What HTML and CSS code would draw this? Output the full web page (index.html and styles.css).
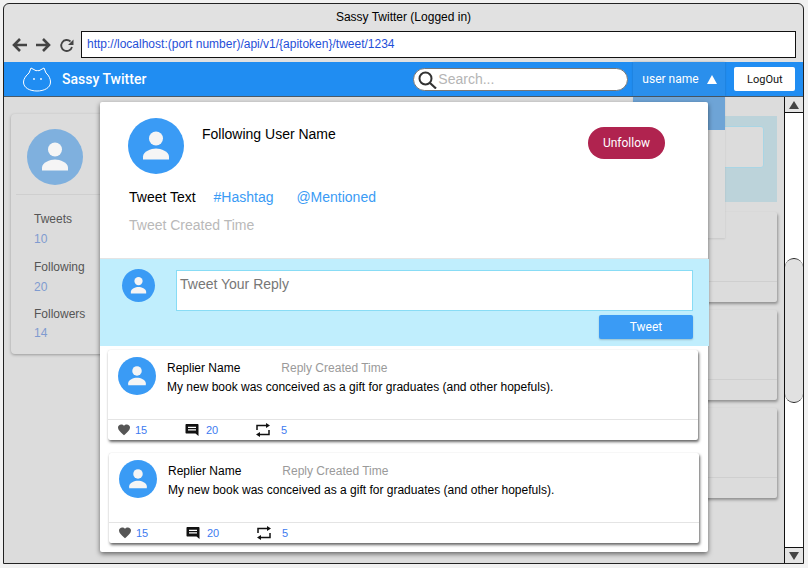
FILE: index.html
```html
<!DOCTYPE html>
<html lang="en">
<head>
  <meta charset="UTF-8">
  <title>Sassy Twitter (Logged in)</title>
  <link rel="stylesheet" href="styles.css">
</head>
<body>

<svg width="0" height="0" class="defs">
  <symbol id="person" viewBox="0 0 56 56">
    <circle cx="28" cy="28" r="28" fill="currentColor"/>
    <circle cx="28" cy="20.5" r="7" fill="#f5f5f5"/>
    <path d="M15 41.5v-3c0-5 8-8 13-8s13 3 13 8v3z" fill="#f5f5f5"/>
  </symbol>
  <symbol id="heart" viewBox="0 0 12 12">
    <path d="M6 11.2 5.1 10.400C2 7.600 0 5.800 0 3.500 0 1.700 1.400.4 3.200.4c1.100 0 2.100.5 2.800 1.300C6.700.9 7.700.4 8.800.4 10.600.4 12 1.700 12 3.500c0 2.300-2 4.100-5.100 6.900z" fill="#555"/>
  </symbol>
  <symbol id="comment" viewBox="0 0 14 14">
    <path d="M1.500 1h11c.6 0 1 .4 1 1v11l-3-2.500h-9c-.6 0-1-.4-1-1V2c0-.6.4-1 1-1z" fill="#111"/>
    <path d="M3 3.800h8v1.200H3zm0 2.500h8v1.200H3z" fill="#fff"/>
  </symbol>
  <symbol id="retweet" viewBox="0 0 16 16">
    <path d="M2 8V3.500h9.500M14 8v4.500H4.500" fill="none" stroke="#111" stroke-width="1.500"/>
    <path d="M11 1l4 2.500-4 2.500zM5 10l-4 2.500L5 15z" fill="#111"/>
  </symbol>
</svg>

<div class="window">
  <div class="title">Sassy Twitter (Logged in)</div>
  <div class="addressbar">
    <svg class="navicons" width="66" height="18" viewBox="0 0 66 18">
      <path d="M16 9H3M9 3 3 9l6 6" fill="none" stroke="#444" stroke-width="2.600"/>
      <path d="M25 9h13M32 3l6 6-6 6" fill="none" stroke="#444" stroke-width="2.600"/>
      <path d="M61 11a5.500 5.500 0 1 1-1.500-5.500" fill="none" stroke="#444" stroke-width="1.800"/>
      <path d="M62.500 3.500V9H57z" fill="#444"/>
    </svg>
    <div class="url">http://localhost:(port number)/api/v1/{apitoken}/tweet/1234</div>
  </div>

  <header class="navbar">
    <svg class="logo" width="28" height="26" viewBox="0 0 28 26">
      <path d="M6 7 8 2l5 2.700c1-.2 2-.2 3 0L21 2l2 5c3 2.500 4.500 6 4.500 9 0 6-6.500 9-13.500 9S.5 22 .5 16c0-3 2.500-6.500 5.500-9z" fill="none" stroke="#fff" stroke-width="1" stroke-linejoin="round"/>
      <circle cx="11" cy="13" r=".9" fill="#fff"/>
      <circle cx="18" cy="13" r=".9" fill="#fff"/>
    </svg>
    <span class="brand">Sassy Twitter</span>
    <div class="search">
      <svg width="20" height="20" viewBox="0 0 20 20">
        <circle cx="7.500" cy="9.500" r="6" fill="none" stroke="#333" stroke-width="2"/>
        <path d="m12 14 6 5.500" stroke="#333" stroke-width="2.200"/>
      </svg>
      <span>Search...</span>
    </div>
    <div class="usermenu">user name <span class="caret"></span></div>
    <button class="logout">LogOut</button>
  </header>

  <div class="content">
    <div class="page">
      <aside class="profile">
        <div class="profile-head">
          <svg class="avatar-lg avatar-dim"><use href="#person"/></svg>
        </div>
        <dl class="stats">
          <dt>Tweets</dt><dd>10</dd>
          <dt>Following</dt><dd>20</dd>
          <dt>Followers</dt><dd>14</dd>
        </dl>
      </aside>
      <div class="feed">
        <div class="composer"><div class="composer-box"></div></div>
        <div class="feed-card"><div class="feed-foot"></div></div>
        <div class="feed-card"><div class="feed-foot"></div></div>
        <div class="feed-card"><div class="feed-foot"></div></div>
      </div>
    </div>

    <div class="dropdown"></div>

    <div class="scrollbar">
      <div class="arrow"><span class="tri-up"></span></div>
      <div class="track"><div class="thumb"></div></div>
      <div class="arrow"><span class="tri-down"></span></div>
    </div>

    <div class="modal">
      <section class="tweet">
        <div class="tweet-head">
          <svg class="avatar-lg"><use href="#person"/></svg>
          <div class="following-name">Following User Name</div>
          <button class="unfollow">Unfollow</button>
        </div>
        <p class="tweet-text">Tweet Text <a>#Hashtag</a> <a>@Mentioned</a></p>
        <p class="tweet-time">Tweet Created Time</p>
      </section>

      <section class="reply-form">
        <svg class="avatar-sm"><use href="#person"/></svg>
        <div class="reply-col">
          <div class="reply-input">Tweet Your Reply</div>
          <button class="tweet-btn">Tweet</button>
        </div>
      </section>

      <article class="reply">
        <div class="reply-body">
          <svg class="avatar-md"><use href="#person"/></svg>
          <div>
            <div class="reply-meta"><span class="replier">Replier Name</span><span class="reply-time">Reply Created Time</span></div>
            <div class="reply-text">My new book was conceived as a gift for graduates (and other hopefuls).</div>
          </div>
        </div>
        <div class="reply-foot">
          <span class="act act-like"><svg width="12" height="12"><use href="#heart"/></svg>15</span>
          <span class="act act-comment"><svg width="14" height="14"><use href="#comment"/></svg>20</span>
          <span class="act act-retweet"><svg width="16" height="16"><use href="#retweet"/></svg>5</span>
        </div>
      </article>

      <article class="reply">
        <div class="reply-body">
          <svg class="avatar-md"><use href="#person"/></svg>
          <div>
            <div class="reply-meta"><span class="replier">Replier Name</span><span class="reply-time">Reply Created Time</span></div>
            <div class="reply-text">My new book was conceived as a gift for graduates (and other hopefuls).</div>
          </div>
        </div>
        <div class="reply-foot">
          <span class="act act-like"><svg width="12" height="12"><use href="#heart"/></svg>15</span>
          <span class="act act-comment"><svg width="14" height="14"><use href="#comment"/></svg>20</span>
          <span class="act act-retweet"><svg width="16" height="16"><use href="#retweet"/></svg>5</span>
        </div>
      </article>
    </div>
  </div>
</div>

</body>
</html>
```

FILE: styles.css
```css
html, body {
  margin: 0;
  padding: 0;
  height: 100%;
  overflow: hidden;
  background-color: #f1f1f1;
  font-family: "Liberation Sans", sans-serif;
  color: #000;
}

.defs {
  position: absolute;
}

button {
  font-family: "Roboto", sans-serif;
  border: none;
  padding: 0;
}

p {
  margin: 0;
}

.window {
  box-sizing: border-box;
  width: 801px;
  height: 561px;
  margin: 3px 0 0 3px;
  border: 1px solid #222;
  border-radius: 6px 6px 0 0;
  background-color: #e1e1e1;
  display: flex;
  flex-direction: column;
  overflow: hidden;
}

.title {
  height: 27px;
  line-height: 27px;
  text-align: center;
  font-size: 12px;
}

.addressbar {
  display: flex;
  align-items: center;
  height: 27px;
  padding: 0 7px;
}

.navicons {
  width: 66px;
  margin-right: 4px;
}

.url {
  box-sizing: border-box;
  flex: 1;
  height: 27px;
  line-height: 25px;
  padding-left: 5px;
  border: 1px solid #111;
  background-color: #fff;
  color: #1f4fd8;
  font-size: 12px;
}

.navbar {
  box-sizing: border-box;
  margin-top: 4px;
  height: 35px;
  display: flex;
  align-items: center;
  padding-left: 19px;
  background-color: #208df2;
  border-bottom: 1px solid #4a5a68;
  position: relative;
}

.logo {
  flex-shrink: 0;
}

.brand {
  margin-left: 11px;
  font-family: "Roboto", sans-serif;
  font-weight: 500;
  font-size: 14px;
  color: #fff;
}

.search {
  box-sizing: border-box;
  width: 215px;
  height: 23px;
  margin-left: 267px;
  padding-left: 4px;
  display: flex;
  align-items: center;
  background-color: #fff;
  border: 1px solid #777;
  border-radius: 12px;
  color: #b5b5b5;
  font-size: 14px;
}

.usermenu {
  box-sizing: border-box;
  width: 92px;
  height: 34px;
  margin-left: 5px;
  padding-left: 9px;
  display: flex;
  align-items: center;
  gap: 8px;
  font-family: "Roboto", sans-serif;
  font-size: 12px;
  color: #fff;
  background-color: #2a8fec;
  box-shadow: 0 0 2px rgba(0, 0, 0, 0.2);
}

.caret {
  width: 0;
  height: 0;
  border-left: 5px solid transparent;
  border-right: 5px solid transparent;
  border-bottom: 9px solid #fff;
}

.logout {
  width: 61px;
  height: 24px;
  margin-left: 9px;
  background-color: #fff;
  border-radius: 2px;
  font-size: 11px;
  color: #111;
}

.content {
  flex: 1;
  position: relative;
  background-color: #dcdcdc;
  overflow: hidden;
}

.page {
  display: flex;
  gap: 11px;
  padding: 17px 0 0 7px;
}

.profile {
  box-sizing: border-box;
  width: 200px;
  height: 240px;
  background-color: #dcdcdc;
  border-radius: 4px;
  box-shadow: 0 1px 3px rgba(0, 0, 0, 0.3);
}

.profile-head {
  box-sizing: border-box;
  height: 81px;
  margin: 0 5px;
  padding: 15px 0 0 11px;
  border-bottom: 1px solid #cfcfcf;
}

.stats {
  margin: 0;
  padding: 17px 0 0 23px;
  font-size: 12px;
}

.stats dt {
  color: #555;
  line-height: 14px;
}

.stats dd {
  margin: 6px 0 14px;
  color: #7f9bd0;
  line-height: 14px;
}

.stats dd:nth-of-type(2) {
  margin-bottom: 13px;
}

.stats dd:nth-of-type(3) {
  margin-top: 5px;
}

.feed {
  width: 555px;
  display: flex;
  flex-direction: column;
  gap: 8px;
}

.composer {
  height: 86px;
  margin: 2px 0;
  padding: 10px 13px 0 0;
  background-color: #bcd3da;
  box-sizing: border-box;
  display: flex;
  justify-content: flex-end;
}

.composer-box {
  width: 300px;
  height: 40px;
  border: 1px solid #a9d5e4;
  border-radius: 3px;
  background-color: #dcdcdc;
}

.feed-card {
  position: relative;
  height: 90px;
  background-color: #dcdcdc;
  border-radius: 2px;
  box-shadow: 1px 2px 3px rgba(0, 0, 0, 0.35);
}

.feed-foot {
  position: absolute;
  left: 0;
  right: 0;
  bottom: 20px;
  border-top: 1px solid #cfcfcf;
}

.dropdown {
  position: absolute;
  top: 0;
  left: 629px;
  width: 92px;
  height: 141px;
  background: linear-gradient(#6ea4d6 0, #6ea4d6 33px, #dcdcdc 33px);
  box-shadow: 0 1px 2px rgba(0, 0, 0, 0.1);
}

.scrollbar {
  position: absolute;
  top: 0;
  right: 0;
  bottom: 0;
  width: 18px;
  border-left: 1px solid #111;
  background-color: #fff;
  display: flex;
  flex-direction: column;
}

.arrow {
  height: 15px;
  background-color: #e4e4e4;
  display: flex;
  align-items: center;
  justify-content: center;
  flex-shrink: 0;
}

.tri-up, .tri-down {
  width: 0;
  height: 0;
  border-left: 5px solid transparent;
  border-right: 5px solid transparent;
}

.tri-up {
  border-bottom: 8px solid #444;
}

.tri-down {
  border-top: 8px solid #444;
}

.track {
  flex: 1;
  border-top: 1px solid #111;
  border-bottom: 1px solid #111;
  padding-top: 145px;
}

.thumb {
  height: 143px;
  background-color: #e1e1e1;
  border: 1px solid #222;
  border-left: none;
  border-right: none;
  border-radius: 9px;
}

.modal {
  position: absolute;
  top: 5px;
  left: 96px;
  width: 608px;
  height: 450px;
  background-color: #fff;
  border-radius: 2px;
  box-shadow: 0 2px 5px rgba(0, 0, 0, 0.55);
}

.tweet {
  height: 157px;
  box-sizing: border-box;
  padding: 16px 0 0 28px;
  border-bottom: 1px solid #e4e4e4;
}

.tweet-head {
  display: flex;
  height: 57px;
}

.avatar-lg {
  width: 56px;
  height: 56px;
  flex-shrink: 0;
  color: #3a9bf5;
}

.avatar-dim {
  color: #7fb0de;
}

.avatar-sm {
  width: 35px;
  height: 33px;
  flex-shrink: 0;
  color: #3a9bf5;
}

.avatar-md {
  width: 38px;
  height: 38px;
  flex-shrink: 0;
  color: #3a9bf5;
}

.following-name {
  margin: 8px 0 0 18px;
  width: 386px;
  font-size: 14px;
  line-height: 16px;
}

.unfollow {
  width: 77px;
  height: 32px;
  margin-top: 9px;
  background-color: #b0234f;
  border-radius: 16px;
  color: #fff;
  font-size: 12px;
}

.tweet-text {
  margin: 14px 0 0 1px;
  font-size: 14px;
  line-height: 16px;
}

.tweet-text a {
  margin-left: 14px;
  color: #3a9bf5;
}

.tweet-text a + a {
  margin-left: 19px;
}

.tweet-time {
  margin: 12px 0 0 1px;
  font-size: 14px;
  line-height: 16px;
  color: #b9b9b9;
}

.reply-form {
  box-sizing: border-box;
  height: 87px;
  width: 609px;
  padding: 10px 16px 0 21px;
  display: flex;
  background-color: #c0eefd;
}

.reply-col {
  margin: 1px 0 0 20px;
  flex: 1;
  display: flex;
  flex-direction: column;
  align-items: flex-end;
}

.reply-input {
  box-sizing: border-box;
  width: 100%;
  height: 41px;
  padding: 5px 3px;
  border: 1px solid #88dcf5;
  background-color: #fff;
  color: #777;
  font-size: 14px;
}

.tweet-btn {
  width: 94px;
  height: 24px;
  margin-top: 4px;
  background-color: #3a9bf5;
  border-radius: 2px;
  color: #fff;
  font-size: 12px;
  box-shadow: 0 1px 2px rgba(0, 0, 0, 0.2);
}

.reply {
  width: 590px;
  height: 90px;
  margin: 4px 0 0 8px;
  box-sizing: border-box;
  background-color: #fff;
  border-radius: 2px;
  box-shadow: 0 0 1px rgba(0, 0, 0, 0.15), 1px 2px 3px rgba(0, 0, 0, 0.6);
  display: flex;
  flex-direction: column;
}

.reply + .reply {
  margin: 13px 0 0 9px;
}

.reply-body {
  flex: 1;
  display: flex;
  padding: 7px 0 0 10px;
  gap: 11px;
}

.reply-meta {
  margin-top: 4px;
  font-size: 12px;
  line-height: 14px;
}

.reply-time {
  margin-left: 41px;
  color: #9a9a9a;
}

.reply-text {
  margin-top: 5px;
  font-size: 12px;
  line-height: 14px;
}

.reply-foot {
  height: 21px;
  box-sizing: border-box;
  border-top: 1px solid #e4e4e4;
  display: flex;
  align-items: center;
  padding-left: 10px;
  font-size: 11px;
  color: #3d7bf0;
}

.act {
  display: flex;
  align-items: center;
  gap: 5px;
}

.act-like {
  width: 67px;
}

.act-comment {
  width: 70px;
  gap: 7px;
}

.act-retweet {
  gap: 10px;
}
```
